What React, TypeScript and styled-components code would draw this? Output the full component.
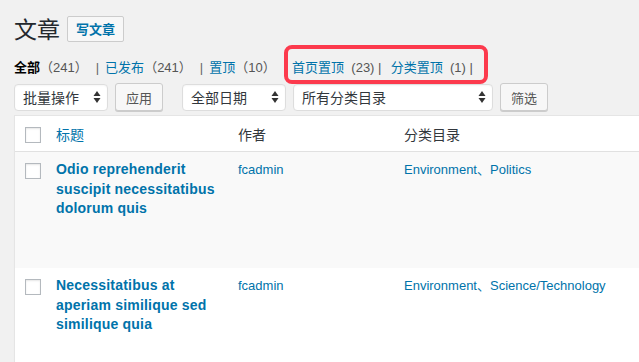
import React from "react";
import styled, { createGlobalStyle } from "styled-components";

const GlobalStyle = createGlobalStyle`
  html, body { margin: 0; padding: 0; background: #f1f1f1; overflow: hidden; }
  body { font-family: "Liberation Sans", "Noto Sans CJK SC", sans-serif; color: #23282d; }
  * { box-sizing: border-box; }
`;

const Page = styled.div`
  position: relative;
  padding: 14px 0 0 14px;
  width: 700px;
`;

const HeaderRow = styled.div`
  display: flex;
  align-items: center;
  gap: 7px;
  height: 28px;
`;

const Title = styled.h1`
  margin: 0;
  font-size: 23px;
  font-weight: 400;
  line-height: 28px;
  color: #23282d;
  font-family: "Noto Sans CJK SC", sans-serif;
`;

const AddButton = styled.a`
  display: inline-flex;
  align-items: center;
  height: 26px;
  padding: 0 8px;
  border: 1px solid #ccc;
  border-radius: 2px;
  background: #f7f7f7;
  color: #0073aa;
  font-size: 13px;
  font-weight: 700;
  font-family: "Noto Sans CJK SC", sans-serif;
  margin-top: 1px;
`;

const SubNav = styled.div`
  display: flex;
  align-items: center;
  margin-top: 16px;
  height: 20px;
  font-size: 13px;
  line-height: 20px;
  font-family: "Liberation Sans", "Noto Sans CJK SC", sans-serif;
  white-space: pre;
`;

const NavLink = styled.span<{ $current?: boolean; $ml?: number }>`
  color: ${(p) => (p.$current ? "#000" : "#0073aa")};
  font-weight: ${(p) => (p.$current ? 700 : 400)};
  margin-left: ${(p) => p.$ml ?? 0}px;
`;

const Count = styled.span`
  color: #555;
`;

const Sep = styled.span`
  color: #666;
  padding: 0 6px 0 8px;
`;

const Highlight = styled.div`
  position: absolute;
  left: 284px;
  top: 45px;
  width: 204px;
  height: 39px;
  border: 4px solid #fc3a4d;
  border-radius: 8px;
  pointer-events: none;
`;

const Filters = styled.div`
  display: flex;
  align-items: center;
  margin-top: 5px;
  height: 28px;
`;

const Select = styled.div<{ $w: number; $ml: number }>`
  width: ${(p) => p.$w}px;
  margin-left: ${(p) => p.$ml}px;
  height: 27px;
  background: #fff;
  border: 1px solid #ddd;
  border-radius: 4px;
  display: flex;
  align-items: center;
  justify-content: space-between;
  padding: 0 6px 0 8px;
  font-size: 14px;
  color: #32373c;
  font-family: "Noto Sans CJK SC", sans-serif;
  box-shadow: inset 0 1px 2px rgba(0,0,0,0.04);
`;

const Button = styled.div<{ $ml: number }>`
  margin-left: ${(p) => p.$ml}px;
  height: 28px;
  padding: 0 10px;
  display: flex;
  align-items: center;
  background: #f7f7f7;
  border: 1px solid #ccc;
  border-radius: 3px;
  box-shadow: 0 1px 0 #ccc;
  color: #555;
  font-size: 13px;
  font-family: "Noto Sans CJK SC", sans-serif;
`;

const Arrows = () => (
  <svg width="8" height="14" viewBox="0 0 8 14">
    <path d="M4 1 L7.5 6 H0.5 Z" fill="#333" />
    <path d="M4 13 L7.5 8 H0.5 Z" fill="#333" />
  </svg>
);

const Table = styled.div`
  margin-top: 4px;
  background: #fff;
  border: 1px solid #e5e5e5;
  border-right: none;
  box-shadow: 0 1px 1px rgba(0,0,0,0.04);
`;

const Row = styled.div<{ $alt?: boolean; $h: number; $head?: boolean }>`
  display: grid;
  grid-template-columns: 41px 182px 166px 1fr;
  height: ${(p) => p.$h}px;
  background: ${(p) => (p.$alt ? "#f9f9f9" : "#fff")};
  border-bottom: ${(p) => (p.$head ? "1px solid #e1e1e1" : "none")};
  padding-top: ${(p) => (p.$head ? 7 : 8)}px;
`;

const CheckCell = styled.div<{ $top: number }>`
  padding: ${(p) => p.$top}px 0 0 10px;
`;

const Checkbox = styled.span`
  display: block;
  width: 16px;
  height: 16px;
  border: 1px solid #b4b9be;
  background: #fff;
  box-shadow: inset 0 1px 2px rgba(0,0,0,0.1);
`;

const HeadCell = styled.div<{ $link?: boolean }>`
  font-size: 14px;
  line-height: 20px;
  padding-top: 1px;
  font-family: "Noto Sans CJK SC", sans-serif;
  color: ${(p) => (p.$link ? "#0073aa" : "#32373c")};
`;

const PostTitle = styled.div`
  font-size: 14px;
  font-weight: 700;
  line-height: 19.5px;
  letter-spacing: 0.2px;
  color: #0073aa;
  padding-right: 8px;
`;

const Cell = styled.div`
  font-size: 13px;
  line-height: 19.5px;
  color: #0073aa;
  font-family: "Liberation Sans", "Noto Sans CJK SC", sans-serif;
`;

const posts = [
  { title: "Odio reprehenderit suscipit necessitatibus dolorum quis", author: "fcadmin", cats: "Environment、Politics", h: 116, alt: true },
  { title: "Necessitatibus at aperiam similique sed similique quia", author: "fcadmin", cats: "Environment、Science/Technology", h: 110, alt: false },
];

export default function App() {
  return (
    <>
      <GlobalStyle />
      <Page>
        <HeaderRow>
          <Title>文章</Title>
          <AddButton>写文章</AddButton>
        </HeaderRow>
        <SubNav>
          <NavLink $current>全部</NavLink>
          <Count>（241）</Count>
          <Sep>|</Sep>
          <NavLink>已发布</NavLink>
          <Count>（241）</Count>
          <Sep>|</Sep>
          <NavLink>置顶</NavLink>
          <Count>（10）</Count>
          <Sep>|</Sep>
          <NavLink $ml={-1}>首页置顶</NavLink>
          <Count>  (23) | </Count>
          <NavLink $ml={2}> 分类置顶</NavLink>
          <Count>  (1) |</Count>
        </SubNav>
        <Highlight />
        <Filters>
          <Select $w={94} $ml={0}>
            <span>批量操作</span>
            <Arrows />
          </Select>
          <Button $ml={7}>应用</Button>
          <Select $w={104} $ml={19}>
            <span>全部日期</span>
            <Arrows />
          </Select>
          <Select $w={200} $ml={7}>
            <span>所有分类目录</span>
            <Arrows />
          </Select>
          <Button $ml={7}>筛选</Button>
        </Filters>
        <Table>
          <Row $h={36} $head>
            <CheckCell $top={4}>
              <Checkbox />
            </CheckCell>
            <HeadCell $link>标题</HeadCell>
            <HeadCell>作者</HeadCell>
            <HeadCell>分类目录</HeadCell>
          </Row>
          {posts.map((p) => (
            <Row key={p.title} $h={p.h} $alt={p.alt}>
              <CheckCell $top={3}>
                <Checkbox />
              </CheckCell>
              <PostTitle>{p.title}</PostTitle>
              <Cell>{p.author}</Cell>
              <Cell>{p.cats}</Cell>
            </Row>
          ))}
        </Table>
      </Page>
    </>
  );
}
